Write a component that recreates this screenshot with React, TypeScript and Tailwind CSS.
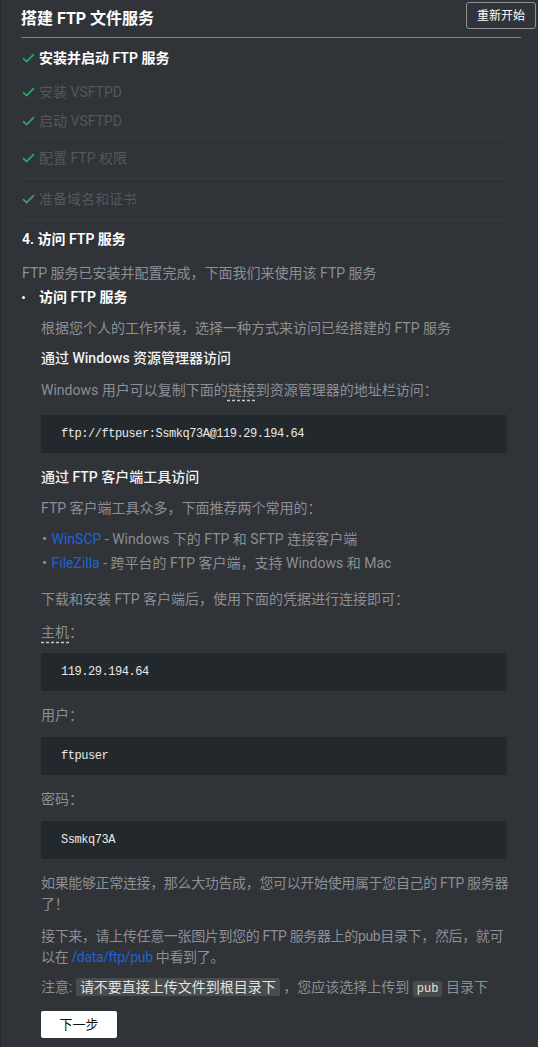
import React from "react"

const Check = () => (
  <svg width="13" height="10" viewBox="0 0 13 10" className="shrink-0">
    <path d="M1 5.2 L4.6 8.6 L12 1.2" fill="none" stroke="#2aa868" strokeWidth="1.8" />
  </svg>
)

const Step = ({ label, dim }: { label: string; dim?: boolean }) => (
  <div className="flex h-[20px] items-center gap-[4px] pl-[1px]">
    <Check />
    <span className={dim ? "text-[#54575c]" : "font-semibold text-white"}>{label}</span>
  </div>
)

const Code = ({ children }: { children: React.ReactNode }) => (
  <div className="flex h-[38px] items-center bg-[#22282b] pl-[20px] font-['Liberation_Mono',monospace] text-[12px] tracking-[-0.45px] text-[#e8e8e8]">
    {children}
  </div>
)

const P = ({ className = "", children }: { className?: string; children: React.ReactNode }) => (
  <p className={`leading-[21px] ${className}`}>{children}</p>
)

export default function App() {
  return (
    <div className="min-h-[1047px] border-l border-[#24272b] bg-[#303338] pb-[10px] font-['Roboto','Noto_Sans_CJK_SC',sans-serif] text-[14px] text-[#8c8f94]">
      {/* header */}
      <div className="ml-[20px] mr-[17px] flex h-[38px] items-center justify-between border-b border-[#7c7e82]">
        <h1 className="text-[16px] font-bold text-white">搭建 FTP 文件服务</h1>
        <button className="-mr-[15px] mb-[6px] h-[27px] rounded-[3px] border border-[#8e9094] px-[10px] text-[12px] text-white">
          重新开始
        </button>
      </div>

      <div className="ml-[20px] mr-[31px]">
        <div className="border-b border-[#393c42] pb-[6px] pt-[10px]">
          <Step label="安装并启动 FTP 服务" />
          <div className="mt-[14px] flex flex-col gap-[9px]">
            <Step label="安装 VSFTPD" dim />
            <Step label="启动 VSFTPD" dim />
          </div>
        </div>
        <div className="flex h-[41px] items-center border-b border-[#393c42]">
          <Step label="配置 FTP 权限" dim />
        </div>
        <div className="flex h-[41px] items-center border-b border-[#393c42]">
          <Step label="准备域名和证书" dim />
        </div>

        <div className="pt-[9px]">
          <div className="flex h-[20px] items-center pl-[1px] font-semibold text-white">4. 访问 FTP 服务</div>
          <P className="mt-[14px] pl-[1px]">FTP 服务已安装并配置完成，下面我们来使用该 FTP 服务</P>
          <div className="mt-[3px] flex items-center">
            <span className="ml-[1px] h-[3px] w-[3px] rounded-full bg-white" />
            <span className="ml-[14px] font-semibold leading-[21px] text-white">访问 FTP 服务</span>
          </div>

          <div className="pl-[20px]">
            <P className="mt-[10px]">根据您个人的工作环境，选择一种方式来访问已经搭建的 FTP 服务</P>
            <P className="mt-[9px] font-medium text-[#f2f2f2]">通过 Windows 资源管理器访问</P>
            <P className="mt-[11px]">
              Windows 用户可以复制下面的
              <span className="underline decoration-[#c8c8c8] decoration-dashed underline-offset-[5px]">链接</span>
              到资源管理器的地址栏访问：
            </P>
            <div className="mt-[14px]">
              <Code>ftp://ftpuser:Ssmkq73A@119.29.194.64</Code>
            </div>

            <P className="mt-[14px] font-medium text-[#f2f2f2]">通过 FTP 客户端工具访问</P>
            <P className="mt-[10px]">FTP 客户端工具众多，下面推荐两个常用的：</P>
            <ul className="mt-[10px] flex flex-col gap-[3px]">
              <li className="leading-[21px]">
                <span className="mx-[1px] text-[15px]">•</span> <span className="text-[#1e63d6]">WinSCP</span> - Windows 下的 FTP 和 SFTP 连接客户端
              </li>
              <li className="leading-[21px]">
                <span className="mx-[1px] text-[15px]">•</span> <span className="text-[#1e63d6]">FileZilla</span> - 跨平台的 FTP 客户端，支持 Windows 和 Mac
              </li>
            </ul>
            <P className="mt-[15px]">下载和安装 FTP 客户端后，使用下面的凭据进行连接即可：</P>

            <P className="mt-[12px]">
              <span className="underline decoration-[#c8c8c8] decoration-dashed underline-offset-[5px]">主机</span>：
            </P>
            <div className="mt-[10px]">
              <Code>119.29.194.64</Code>
            </div>
            <P className="mt-[14px]">用户：</P>
            <div className="mt-[11px]">
              <Code>ftpuser</Code>
            </div>
            <P className="mt-[14px]">密码：</P>
            <div className="mt-[11px]">
              <Code>Ssmkq73A</Code>
            </div>

            <P className="mt-[14px] tracking-[-0.35px]">
              <span className="whitespace-nowrap">如果能够正常连接，那么大功告成，您可以开始使用属于您自己的 FTP 服务器</span>
              <br />
              了！
            </P>
            <P className="mt-[11px] tracking-[-0.35px]">
              <span className="whitespace-nowrap">接下来，请上传任意一张图片到您的 FTP 服务器上的pub目录下，然后，就可</span>
              <br />
              以在 <span className="text-[#1e63d6]">/data/ftp/pub</span> 中看到了。
            </P>
            <P className="mt-[9px] whitespace-nowrap">
              注意:{" "}
              <span className="rounded-[2px] bg-[#4a4b4d] px-[4px] py-[1px] text-[#e2e2e2]">请不要直接上传文件到根目录下</span>{" "}
              ，您应该选择上传到{" "}
              <span className="rounded-[2px] bg-[#4a4b4d] px-[4px] py-[1px] font-['Liberation_Mono',monospace] text-[12px] text-[#e2e2e2]">
                pub
              </span>{" "}
              目录下
            </P>
            <button className="mt-[11px] h-[27px] w-[76px] rounded-[2px] bg-white text-[13px] text-[#111]">下一步</button>
          </div>
        </div>
      </div>
    </div>
  )
}
